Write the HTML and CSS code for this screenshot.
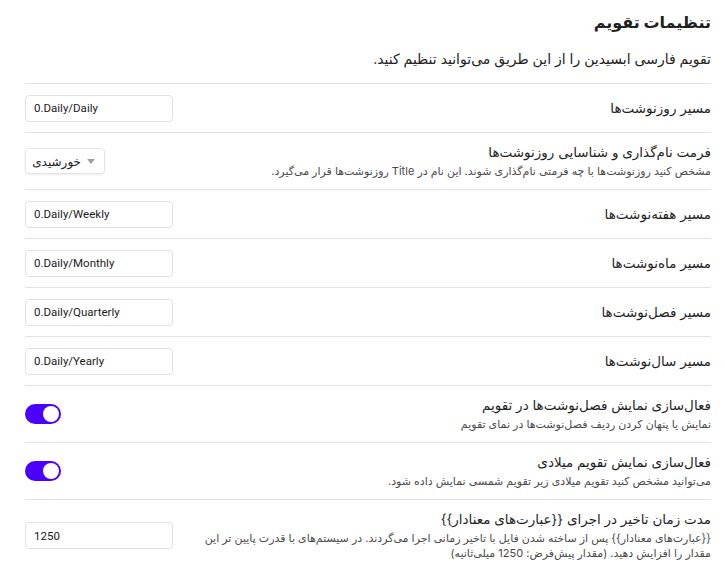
FILE: index.html
```html
<!DOCTYPE html>
<html lang="fa" dir="rtl">
<head>
<meta charset="utf-8">
<link rel="stylesheet" href="styles.css">
</head>
<body>
<div class="page">
  <h2 class="title">تنظیمات تقویم</h2>
  <p class="intro">تقویم فارسی ابسیدین را از این طریق می‌توانید تنظیم کنید.</p>

  <div class="item">
    <div class="info"><div class="name">مسیر روزنوشت‌ها</div></div>
    <div class="control"><input class="text" type="text" value="0.Daily/Daily" dir="ltr"></div>
  </div>

  <div class="item">
    <div class="info">
      <div class="name">فرمت نام‌گذاری و شناسایی روزنوشت‌ها</div>
      <div class="desc">مشخص کنید روزنوشت‌ها با چه فرمتی نام‌گذاری شوند. این نام در Title روزنوشت‌ها قرار می‌گیرد.</div>
    </div>
    <div class="control">
      <div class="dropdown"><svg class="caret" width="8" height="5" viewBox="0 0 8 5"><path d="M0 0h8L4 5z" fill="#a0a0a0"/></svg><span>خورشیدی</span></div>
    </div>
  </div>

  <div class="item">
    <div class="info"><div class="name">مسیر هفته‌نوشت‌ها</div></div>
    <div class="control"><input class="text" type="text" value="0.Daily/Weekly" dir="ltr"></div>
  </div>

  <div class="item">
    <div class="info"><div class="name">مسیر ماه‌نوشت‌ها</div></div>
    <div class="control"><input class="text" type="text" value="0.Daily/Monthly" dir="ltr"></div>
  </div>

  <div class="item">
    <div class="info"><div class="name">مسیر فصل‌نوشت‌ها</div></div>
    <div class="control"><input class="text" type="text" value="0.Daily/Quarterly" dir="ltr"></div>
  </div>

  <div class="item">
    <div class="info"><div class="name">مسیر سال‌نوشت‌ها</div></div>
    <div class="control"><input class="text" type="text" value="0.Daily/Yearly" dir="ltr"></div>
  </div>

  <div class="item">
    <div class="info">
      <div class="name">فعال‌سازی نمایش فصل‌نوشت‌ها در تقویم</div>
      <div class="desc">نمایش یا پنهان کردن ردیف فصل‌نوشت‌ها در نمای تقویم</div>
    </div>
    <div class="control"><div class="toggle"><div class="knob"></div></div></div>
  </div>

  <div class="item">
    <div class="info">
      <div class="name">فعال‌سازی نمایش تقویم میلادی</div>
      <div class="desc">می‌توانید مشخص کنید تقویم میلادی زیر تقویم شمسی نمایش داده شود.</div>
    </div>
    <div class="control"><div class="toggle"><div class="knob"></div></div></div>
  </div>

  <div class="item">
    <div class="info">
      <div class="name">مدت زمان تاخیر در اجرای {{عبارت‌های معنادار}}</div>
      <div class="desc">{{عبارت‌های معنادار}} پس از ساخته شدن فایل با تاخیر زمانی اجرا می‌گردند. در سیستم‌های با قدرت پایین تر این مقدار را افزایش دهید. (مقدار پیش‌فرض: 1250 میلی‌ثانیه)</div>
    </div>
    <div class="control"><input class="text" type="text" value="1250" dir="ltr"></div>
  </div>
</div>
</body>
</html>
```
FILE: styles.css
```css
html, body {
  margin: 0;
  padding: 0;
  background: #ffffff;
}
body {
  font-family: "Inter", "DejaVu Sans", sans-serif;
  color: #222222;
}
.page {
  padding: 0 14px 0 25px;
}
.title {
  margin: 0;
  padding-top: 9px;
  font-size: 16px;
  font-weight: 700;
  line-height: 26px;
  color: #1f1f1f;
}
.intro {
  margin: 0;
  padding-top: 14px;
  padding-bottom: 14px;
  font-size: 14px;
  line-height: 20px;
  color: #222222;
}
.item {
  display: flex;
  align-items: center;
  justify-content: space-between;
  gap: 24px;
  border-top: 1px solid #e3e3e3;
  padding: 10px 0;
  min-height: 28px;
}
.info {
  flex: 1;
  min-width: 0;
}
.name {
  font-size: 13.5px;
  line-height: 19px;
  color: #1f1f1f;
}
.desc {
  font-size: 11px;
  line-height: 15px;
  color: #4a4a4a;
  padding-top: 2px;
}
.control {
  flex: none;
  display: flex;
}
.text {
  width: 148px;
  height: 27px;
  box-sizing: border-box;
  border: 1px solid #e1e1e1;
  border-radius: 4px;
  padding: 0 8px;
  font-family: "Roboto", "DejaVu Sans", sans-serif;
  font-size: 11.5px;
  font-weight: 400;
  color: #1a1a1a;
  background: #ffffff;
  text-align: left;
  outline: none;
}
.dropdown {
  width: 80px;
  height: 26px;
  box-sizing: border-box;
  border: 1px solid #e4e4e4;
  border-radius: 4px;
  box-shadow: 0 1px 2px rgba(0,0,0,0.08);
  display: flex;
  align-items: center;
  justify-content: flex-start;
  gap: 6px;
  padding: 0 9px;
  font-size: 12px;
  color: #222222;
}
.caret {
  flex: none;
}
.toggle {
  width: 36px;
  height: 20px;
  box-sizing: border-box;
  border-radius: 10px;
  background: #4a00ff;
  display: flex;
  align-items: center;
  justify-content: flex-start;
  padding: 0 2px;
}
.knob {
  width: 16px;
  height: 16px;
  border-radius: 50%;
  background: #ffffff;
}
```
